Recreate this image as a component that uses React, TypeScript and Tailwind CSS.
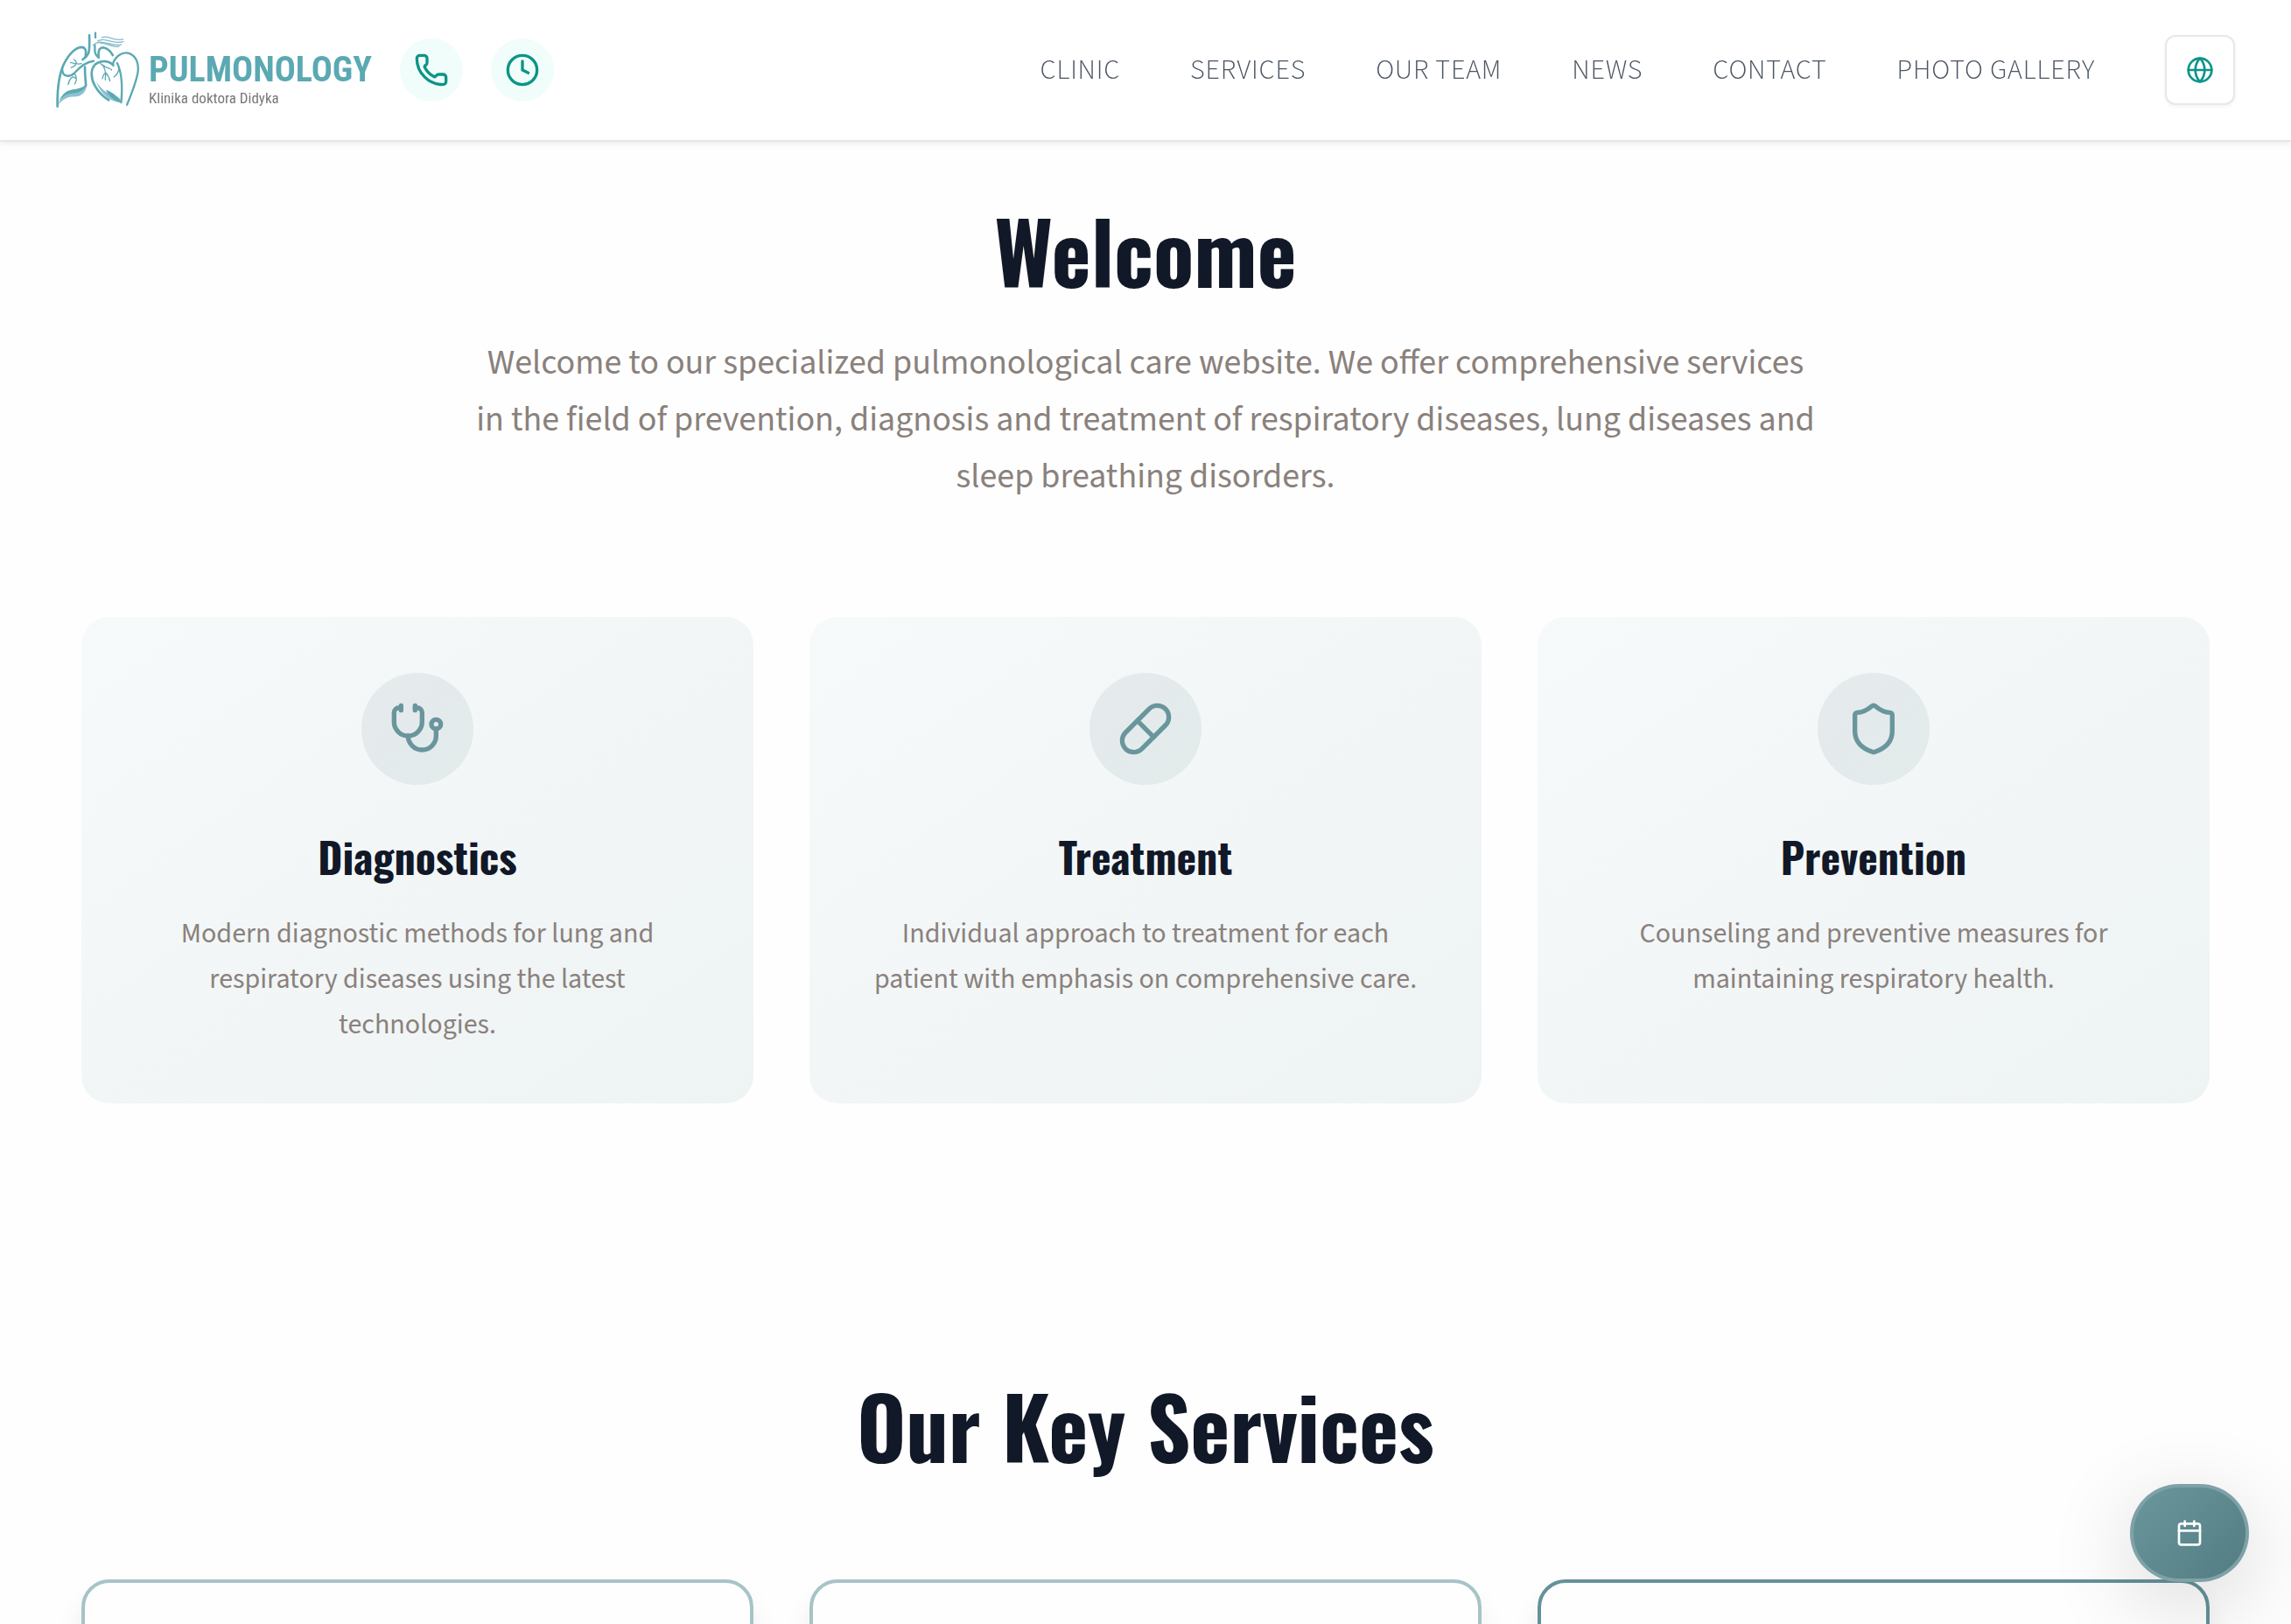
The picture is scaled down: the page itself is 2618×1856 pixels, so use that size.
import { Calendar, Clock, Globe, Phone, Pill, Shield, Stethoscope, type LucideIcon } from 'lucide-react';

const navItems = ['CLINIC', 'SERVICES', 'OUR TEAM', 'NEWS', 'CONTACT', 'PHOTO GALLERY'];

const features: { icon: LucideIcon; title: string; text: string }[] = [
  {
    icon: Stethoscope,
    title: 'Diagnostics',
    text: 'Modern diagnostic methods for lung and respiratory diseases using the latest technologies.',
  },
  {
    icon: Pill,
    title: 'Treatment',
    text: 'Individual approach to treatment for each patient with emphasis on comprehensive care.',
  },
  {
    icon: Shield,
    title: 'Prevention',
    text: 'Counseling and preventive measures for maintaining respiratory health.',
  },
];

const serviceBorders = ['border-[#a6c4c6]', 'border-[#a6c4c6]', 'border-[#64929a]'];

function LungsMark() {
  return (
    <svg viewBox="72 40 290 276" className="h-[92px] w-24 shrink-0" fill="none" strokeLinecap="round" aria-hidden="true">
      <path d="M77 308C84 286 108 268 136 270C158 270 176 258 179 228C166 240 150 244 132 246C102 250 88 272 77 308Z" fill="#8fc0d0" />
      <path d="M77 300C84 276 102 260 130 258C156 256 172 246 178 226C166 238 150 242 132 245C102 248 86 270 77 300Z" fill="#5aa9b3" />
      <path d="M210 216C226 244 250 262 284 270C292 274 297 282 299 292C258 288 226 262 210 216Z" fill="#8fc0d0" />
      <path d="M244 246C262 254 280 262 298 290C270 284 254 268 244 246Z" fill="#5aa9b3" />
      <g stroke="#5aa9b3">
        <path d="M77 304C76 250 80 200 98 160C114 126 138 100 160 99C174 99 178 112 173 134" strokeWidth="8" />
        <path d="M187 58C187 84 190 108 183 122C178 132 174 136 164 142" strokeWidth="8" />
        <path d="M208 50V66M206 92V112C207 124 212 130 220 136" strokeWidth="7" />
        <path d="M219 132C217 108 224 98 238 101C252 105 262 116 268 127" strokeWidth="8" />
        <path d="M94 178C94 202 120 204 136 188C154 168 174 150 202 147" strokeWidth="7" />
        <path d="M172 168C171 188 174 206 175 232" strokeWidth="8" />
        <path d="M270 162C256 144 226 144 208 158C190 176 192 206 206 232C218 254 234 270 254 282" strokeWidth="8" />
        <path d="M268 158C276 130 302 112 326 121C352 132 360 162 353 194C346 228 332 262 317 298" strokeWidth="7" />
        <path d="M283 154C298 184 302 236 297 290" strokeWidth="7" />
        <path d="M136 190C144 202 143 216 137 226M138 206C132 196 118 206 114 228" strokeWidth="4" />
        <path d="M160 156C146 160 134 156 122 152M144 156C142 148 138 144 134 142M140 160C134 166 132 168 124 170" strokeWidth="4" />
        <path d="M224 154C242 166 246 184 242 212M232 160C246 174 262 170 264 178M244 188C238 190 234 198 232 208M244 188C252 196 256 204 258 216" strokeWidth="4" />
        <path d="M290 170C288 188 280 196 272 202" strokeWidth="4" />
      </g>
      <g stroke="#86bccc" strokeWidth="4">
        <path d="M230 66C252 54 264 80 304 72" />
        <path d="M216 78C244 62 262 92 304 80" />
        <path d="M200 92C230 66 260 100 298 90" />
        <path d="M226 86C246 82 262 104 290 96" />
      </g>
    </svg>
  );
}

function Header() {
  return (
    <header className="sticky top-0 z-10 flex h-[162px] shrink-0 items-center justify-between border-b-2 border-[#e5e7eb] bg-white px-16 shadow-[0_2px_6px_rgba(0,0,0,0.08)]">
      <div className="flex items-center gap-8">
        <a href="#home" className="flex w-[361px] items-center gap-2.5">
          <LungsMark />
          <span className="flex flex-col whitespace-nowrap pt-6">
            <span className="font-['Roboto_Condensed'] text-[40px] leading-10 font-bold text-[#5aa9b3]">PULMONOLOGY</span>
            <span className="font-['Roboto_Condensed'] text-[17px] leading-6 text-[#77787b]">Klinika doktora Didyka</span>
          </span>
        </a>
        <button type="button" aria-label="Phone" className="flex size-18 items-center justify-center rounded-full bg-[#f0fdfa] text-[#0d9488]">
          <Phone className="size-10" />
        </button>
        <button type="button" aria-label="Opening hours" className="flex size-18 items-center justify-center rounded-full bg-[#f0fdfa] text-[#0d9488]">
          <Clock className="size-10" />
        </button>
      </div>
      <nav className="flex items-center gap-20">
        {navItems.map((item) => (
          <a key={item} href="#" className="text-[32px] leading-12 font-light tracking-wide whitespace-nowrap text-[#4b5563]">
            {item}
          </a>
        ))}
        <button type="button" aria-label="Language" className="flex size-20 items-center justify-center rounded-xl border-2 border-[#e5e7eb] bg-white text-[#0d9488] shadow-[0_2px_4px_rgba(0,0,0,0.05)]">
          <Globe className="size-8" />
        </button>
      </nav>
    </header>
  );
}

export default function App() {
  return (
    <div className="flex h-screen flex-col overflow-hidden bg-[#fefefe] font-['Source_Sans_3',sans-serif]">
      <Header />
      <main className="mx-auto w-full max-w-[2560px] px-16">
        <section className="pt-19">
          <h1 className="text-center font-['Oswald'] text-[96px] leading-24 font-bold text-[#111827]">Welcome</h1>
          <p className="mx-auto mt-12 max-w-[1536px] text-center text-[40px] leading-[65px] text-[#8a817c]">
            Welcome to our specialized pulmonological care website. We offer comprehensive services in the field of
            prevention, diagnosis and treatment of respiratory diseases, lung diseases and sleep breathing disorders.
          </p>
          <div className="mt-32 grid grid-cols-3 gap-16">
            {features.map(({ icon: Icon, title, text }) => (
              <article key={title} className="flex flex-col items-center rounded-[32px] bg-linear-145 from-[#f6fafa] via-[#f2f6f7] to-[#eef3f4] p-16 text-center">
                <div className="flex size-32 items-center justify-center rounded-full bg-linear-135 from-[#e6eaec] to-[#e2ebeb] text-[#69969c]">
                  <Icon className="size-16" />
                </div>
                <h3 className="mt-12 font-['Oswald'] text-[48px] leading-17 font-bold text-[#111827]">{title}</h3>
                <p className="mt-7 text-[32px] leading-[52px] text-[#8a817c]">{text}</p>
              </article>
            ))}
          </div>
        </section>
        <section className="pt-80">
          <h2 className="text-center font-['Oswald'] text-[96px] leading-24 font-bold text-[#111827]">Our Key Services</h2>
          <div className="mt-32 grid grid-cols-3 gap-16">
            {serviceBorders.map((border, i) => (
              <article key={i} className={`h-96 rounded-[32px] border-4 bg-[#fefefe] shadow-[0_20px_30px_rgba(0,0,0,0.08)] ${border}`} />
            ))}
          </div>
        </section>
      </main>
      <button type="button" aria-label="Book an appointment" className="fixed right-12 bottom-12 z-20 flex h-28 w-[136px] items-center justify-center rounded-full bg-[#7fa1a7] p-1 shadow-[0_24px_100px_rgba(0,0,0,0.16)]">
        <span className="flex size-full items-center justify-center rounded-full bg-linear-135 from-[#6a979d] to-[#527c82] text-white">
          <Calendar className="size-8" />
        </span>
      </button>
    </div>
  );
}
